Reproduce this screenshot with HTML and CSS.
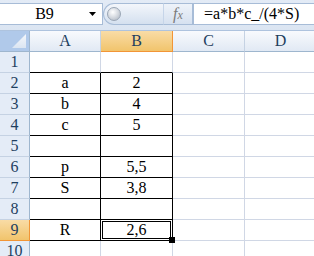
FILE: index.html
```html
<!DOCTYPE html>
<html lang="ru">
<head>
    <meta charset="UTF-8">
    <title>Лист1</title>
    <link rel="stylesheet" href="styles.css">
</head>
<body>
    <div class="formula-bar">
        <div class="name-box">
            <span class="name-text">B9</span>
            <svg class="drop" width="7" height="4" viewBox="0 0 7 4"><path d="M0 0H7L3.5 4Z" fill="#000"/></svg>
        </div>
        <div class="splitter"><span class="knob"></span></div>
        <div class="fx-btn"><span class="f">f</span><span class="x">x</span></div>
        <div class="formula-input">=a*b*c_/(4*S)</div>
    </div>

    <div class="sheet">
        <!-- заголовки столбцов -->
        <div class="corner"><span class="tri"></span></div>
        <div class="col-head">A</div>
        <div class="col-head sel">B</div>
        <div class="col-head">C</div>
        <div class="col-head">D</div>

        <div class="row-head">1</div>
        <div class="cell bb"></div><div class="cell bb"></div><div class="cell"></div><div class="cell"></div>

        <div class="row-head">2</div>
        <div class="cell box">a</div><div class="cell box">2</div><div class="cell"></div><div class="cell"></div>

        <div class="row-head">3</div>
        <div class="cell box">b</div><div class="cell box">4</div><div class="cell"></div><div class="cell"></div>

        <div class="row-head">4</div>
        <div class="cell box">c</div><div class="cell box">5</div><div class="cell"></div><div class="cell"></div>

        <div class="row-head">5</div>
        <div class="cell box"></div><div class="cell box"></div><div class="cell"></div><div class="cell"></div>

        <div class="row-head">6</div>
        <div class="cell box">p</div><div class="cell box">5,5</div><div class="cell"></div><div class="cell"></div>

        <div class="row-head">7</div>
        <div class="cell box">S</div><div class="cell box">3,8</div><div class="cell"></div><div class="cell"></div>

        <div class="row-head">8</div>
        <div class="cell box"></div><div class="cell box"></div><div class="cell"></div><div class="cell"></div>

        <div class="row-head sel">9</div>
        <div class="cell box">R</div><div class="cell box active">2,6<span class="handle"></span></div><div class="cell"></div><div class="cell"></div>

        <div class="row-head">10</div>
        <div class="cell"></div><div class="cell"></div><div class="cell"></div><div class="cell"></div>
    </div>
</body>
</html>
```

FILE: styles.css
```css
body {
    margin: 0;
    overflow: hidden;
    background: #fff;
    font-family: "Liberation Serif", "Times New Roman", serif;
    font-size: 16px;
}

/* строка формул */
.formula-bar {
    display: flex;
    align-items: flex-start;
    height: 31px;
    box-sizing: border-box;
    padding-top: 3px;
    background: linear-gradient(#e3ebf6, #dbe5f2);
    border-bottom: 1px solid #aec3de;
}

.name-box {
    display: flex;
    align-items: center;
    width: 103px;
    height: 22px;
    box-sizing: border-box;
    background: #fff;
    border: 1px solid #a7bcd7;
    border-left: none;
}

.name-text {
    flex: 1;
    text-align: center;
    line-height: 20px;
}

.drop {
    margin-right: 6px;
}

.splitter {
    position: relative;
    width: 60px;
    height: 22px;
    box-sizing: border-box;
    border: 1px solid #a7bcd7;
    border-right: none;
    border-radius: 11px 0 0 11px;
    background: linear-gradient(#f3f6fb, #d4e0ef);
}

.knob {
    position: absolute;
    left: 3px;
    top: 3px;
    width: 14px;
    height: 14px;
    border-radius: 50%;
    background: radial-gradient(circle at 40% 35%, #ffffff 0, #d9dde3 45%, #a9b2be 100%);
    border: 1px solid #9aa6b5;
    box-sizing: border-box;
}

.fx-btn {
    display: flex;
    align-items: baseline;
    justify-content: center;
    width: 30px;
    height: 22px;
    box-sizing: border-box;
    border: 1px solid #a7bcd7;
    border-left: 1px solid #c6d5e9;
    background: linear-gradient(#eef3fa, #d6e1f0);
    color: #7b7b7b;
    font-style: italic;
    line-height: 20px;
}

.fx-btn .f {
    font-size: 16px;
}

.fx-btn .x {
    font-size: 12px;
}

.formula-input {
    flex: 1;
    height: 22px;
    box-sizing: border-box;
    padding-left: 10px;
    background: #fff;
    border: 1px solid #a7bcd7;
    border-right: none;
    line-height: 20px;
}

/* сетка листа */
.sheet {
    display: grid;
    grid-template-columns: 30px 71px 72px 72px 72px;
    grid-auto-rows: 21px;
}

.sheet > div {
    box-sizing: border-box;
    line-height: 20px;
    text-align: center;
}

.corner {
    position: relative;
    background: #b0c9ea;
    border-right: 1px solid #9eb6ce;
    border-bottom: 1px solid #9eb6ce;
}

.tri {
    position: absolute;
    right: 3px;
    bottom: 3px;
    width: 14px;
    height: 14px;
    background: linear-gradient(#f4f7fb, #dbe5f2);
    clip-path: polygon(100% 0, 100% 100%, 0 100%);
}

.col-head {
    background: linear-gradient(#f8fafd, #e1e9f4);
    border-right: 1px solid #c5d2e3;
    border-bottom: 1px solid #9eb6ce;
    color: #1f3f5f;
}

.col-head.sel {
    background: linear-gradient(#f9dca6, #f1c46c);
    border-right: 1px solid #f29536;
    border-bottom: 1px solid #f29536;
}

.row-head {
    background: #e4ecf7;
    border-right: 1px solid #9eb6ce;
    border-bottom: 1px solid #c5d2e3;
    color: #1f3f5f;
}

.row-head.sel {
    background: linear-gradient(#f9dca6, #f1c46c);
    border-right: 1px solid #f29536;
    border-bottom: 1px solid #f29536;
}

.cell {
    border-right: 1px solid #d0d7e5;
    border-bottom: 1px solid #d0d7e5;
}

.cell.bb {
    border-bottom-color: #000;
}

.cell.box {
    border-right-color: #000;
    border-bottom-color: #000;
}

.cell.active {
    position: relative;
    box-shadow: inset 0 0 0 1px #fff, inset 0 0 0 2px #000;
}

.handle {
    position: absolute;
    right: -3px;
    bottom: -3px;
    width: 6px;
    height: 6px;
    background: #000;
}
```
